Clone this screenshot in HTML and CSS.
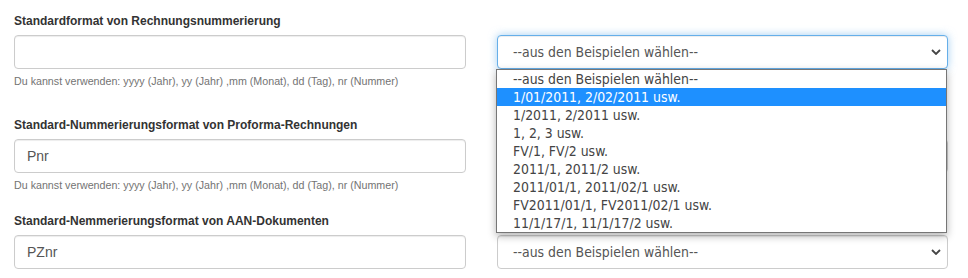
FILE: index.html
```html
<!DOCTYPE html>
<html lang="de">
<head>
    <meta charset="UTF-8">
    <meta name="viewport" content="width=device-width, initial-scale=1.0">
    <title>Nummerierung</title>
    <link rel="stylesheet" href="styles.css">
</head>
<body>
    <main class="settings">
        <div class="row row-first">
            <div class="field">
                <label for="invoice-format">Standardformat von Rechnungsnummerierung</label>
                <input type="text" id="invoice-format" class="form-control" value="">
                <p class="help">Du kannst verwenden: yyyy (Jahr), yy (Jahr) ,mm (Monat), dd (Tag), nr (Nummer)</p>
            </div>
            <div class="side">
                <div class="select-wrap">
                    <div class="select is-open">--aus den Beispielen wählen--</div>
                    <ul class="dropdown">
                        <li>--aus den Beispielen wählen--</li>
                        <li class="active">1/01/2011, 2/02/2011 usw.</li>
                        <li>1/2011, 2/2011 usw.</li>
                        <li>1, 2, 3 usw.</li>
                        <li>FV/1, FV/2 usw.</li>
                        <li>2011/1, 2011/2 usw.</li>
                        <li>2011/01/1, 2011/02/1 usw.</li>
                        <li>FV2011/01/1, FV2011/02/1 usw.</li>
                        <li>11/1/17/1, 11/1/17/2 usw.</li>
                    </ul>
                </div>
            </div>
        </div>
        <div class="row row-second">
            <div class="field">
                <label for="proforma-format">Standard-Nummerierungsformat von Proforma-Rechnungen</label>
                <input type="text" id="proforma-format" class="form-control" value="Pnr">
                <p class="help">Du kannst verwenden: yyyy (Jahr), yy (Jahr) ,mm (Monat), dd (Tag), nr (Nummer)</p>
            </div>
            <div class="side">
                <div class="select">--aus den Beispielen wählen--</div>
            </div>
        </div>
        <div class="row row-third">
            <div class="field">
                <label for="aan-format">Standard-Nemmerierungsformat von AAN-Dokumenten</label>
                <input type="text" id="aan-format" class="form-control" value="PZnr">
            </div>
            <div class="side">
                <div class="select">--aus den Beispielen wählen--</div>
            </div>
        </div>
    </main>
</body>
</html>
```

FILE: styles.css
```css
body {
    margin: 0;
    font-family: 'Liberation Sans', Arial, Helvetica, sans-serif;
    font-size: 14px;
    color: #333;
    background-color: #fff;
}
.settings {
    padding: 11px 20px 0 14px;
}
.row {
    display: grid;
    grid-template-columns: 452px 451px;
    column-gap: 31px;
}
.row-second {
    margin-top: 27px;
}
.row-third {
    margin-top: 19px;
}
label {
    display: block;
    font-size: 12px;
    font-weight: bold;
    line-height: 20px;
    margin-bottom: 4px;
}
.form-control {
    display: block;
    width: 100%;
    height: 34px;
    padding: 6px 12px;
    font-family: inherit;
    font-size: 14px;
    color: #555;
    border: 1px solid #ccc;
    border-radius: 4px;
    box-shadow: inset 0 1px 1px rgba(0, 0, 0, 0.075);
    box-sizing: border-box;
    margin: 0;
}
.help {
    margin: 5px 0 0;
    font-size: 10.7px;
    line-height: 14px;
    color: #737373;
}
.side {
    padding-top: 24px;
}
.select-wrap {
    position: relative;
}
.select {
    height: 34px;
    padding: 0 30px 0 15px;
    line-height: 32px;
    font-family: 'DejaVu Sans Condensed', 'DejaVu Sans', sans-serif;
    font-stretch: condensed;
    font-size: 13.9px;
    color: #555;
    border: 1px solid #ccc;
    border-radius: 4px;
    box-shadow: inset 0 1px 1px rgba(0, 0, 0, 0.075);
    box-sizing: border-box;
    background: #fff url("data:image/svg+xml,%3Csvg xmlns='http://www.w3.org/2000/svg' width='10' height='6' viewBox='0 0 10 6'%3E%3Cpath d='M1 1l4 4 4-4' fill='none' stroke='%23444' stroke-width='1.8'/%3E%3C/svg%3E") no-repeat right 6px center;
}
.select.is-open {
    border-color: #66afe9;
    box-shadow: inset 0 1px 1px rgba(0, 0, 0, 0.075), 0 0 8px rgba(102, 175, 233, 0.6);
}
.dropdown {
    position: absolute;
    top: 34px;
    left: -1px;
    width: 451px;
    margin: 0;
    padding: 0;
    list-style: none;
    background-color: #fff;
    border: 1px solid #767676;
    box-sizing: border-box;
    box-shadow: 0 3px 8px rgba(0, 0, 0, 0.3);
    z-index: 10;
}
.dropdown li {
    height: 18px;
    line-height: 18px;
    padding-left: 16px;
    font-family: 'DejaVu Sans Condensed', 'DejaVu Sans', sans-serif;
    font-stretch: condensed;
    font-size: 13.9px;
    color: #444;
}
.dropdown li.active {
    background-color: #1e90ff;
    color: #fff;
}
```
